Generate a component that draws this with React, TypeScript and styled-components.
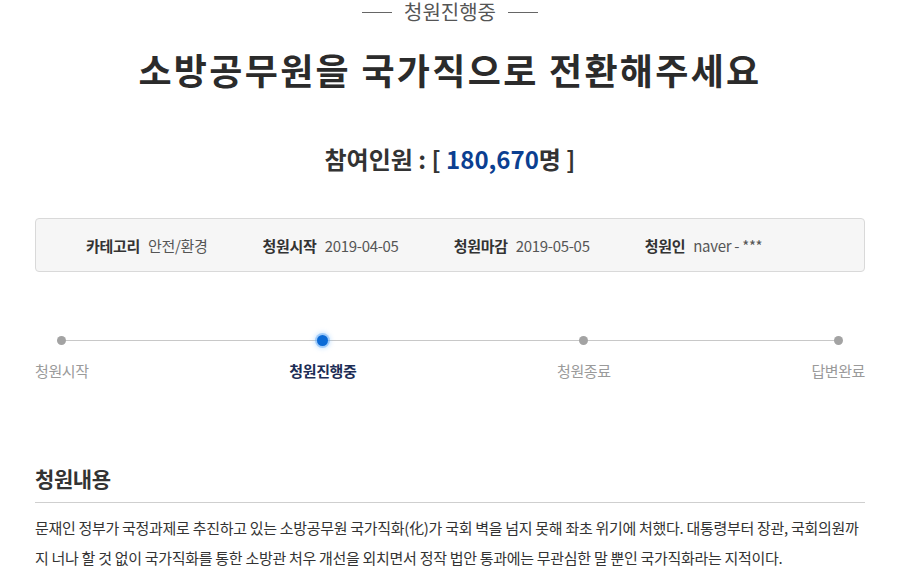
import styled, { createGlobalStyle } from "styled-components";

const GlobalStyle = createGlobalStyle`
  html, body {
    margin: 0;
    padding: 0;
    background: #fff;
    overflow: hidden;
  }
  body {
    font-family: "Noto Sans CJK KR", "Noto Sans", sans-serif;
    color: #333;
  }
`;

const Page = styled.div`
  width: 830px;
  margin: 0 auto;
  display: flex;
  flex-direction: column;
`;

const Status = styled.div`
  display: flex;
  justify-content: center;
  align-items: center;
  gap: 12px;
  font-size: 20px;
  line-height: 24px;
  color: #555;
  &::before,
  &::after {
    content: "";
    width: 30px;
    height: 1px;
    background: #666;
  }
`;

const Title = styled.h1`
  margin: 21px 0 0;
  text-align: center;
  font-size: 36px;
  line-height: 48px;
  font-weight: 700;
  color: #2b2b2b;
  letter-spacing: 2.3px;
`;

const Count = styled.div`
  margin-top: 50px;
  text-align: center;
  font-size: 24px;
  line-height: 32px;
  font-weight: 700;
  color: #333;
`;

const Num = styled.span`
  color: #0b3f91;
`;

const InfoBox = styled.ul`
  margin: 43px 0 0;
  padding: 0 0 0 50px;
  height: 54px;
  box-sizing: border-box;
  list-style: none;
  display: flex;
  align-items: center;
  gap: 55px;
  background: #f6f6f6;
  border: 1px solid #d9d9d9;
  border-radius: 4px;
`;

const InfoItem = styled.li`
  display: flex;
  align-items: center;
  gap: 8px;
  font-size: 15px;
  letter-spacing: -0.3px;
`;

const InfoLabel = styled.strong`
  font-weight: 700;
  color: #333;
`;

const InfoValue = styled.span`
  color: #555;
`;

const Steps = styled.ol`
  position: relative;
  margin: 58px 0 0;
  padding: 0;
  list-style: none;
  display: flex;
  justify-content: space-between;
  &::before {
    content: "";
    position: absolute;
    left: 27px;
    right: 28px;
    top: 10px;
    height: 1px;
    background: #c8c8c8;
  }
`;

const Step = styled.li`
  position: relative;
  display: flex;
  flex-direction: column;
  align-items: center;
`;

const DotWrap = styled.div`
  height: 20px;
  display: flex;
  align-items: center;
  justify-content: center;
`;

const Dot = styled.span<{ $active?: boolean }>`
  width: ${(p) => (p.$active ? "11px" : "9px")};
  height: ${(p) => (p.$active ? "11px" : "9px")};
  border-radius: 50%;
  background: ${(p) => (p.$active ? "#0a6ad6" : "#a3a3a3")};
  box-shadow: ${(p) =>
    p.$active
      ? "0 0 0 2px rgba(90, 165, 245, 0.45), 0 0 4px 3px rgba(120, 190, 255, 0.35)"
      : "none"};
`;

const StepLabel = styled.span<{ $active?: boolean }>`
  margin-top: 10px;
  font-size: 15px;
  line-height: 22px;
  letter-spacing: -0.4px;
  font-weight: ${(p) => (p.$active ? 700 : 400)};
  color: ${(p) => (p.$active ? "#1c2d55" : "#9a9a9a")};
`;

const SectionTitle = styled.h2`
  margin: 82px 0 0;
  padding-bottom: 10px;
  border-bottom: 1px solid #cfcfcf;
  font-size: 21px;
  line-height: 28px;
  font-weight: 700;
  color: #333;
  letter-spacing: -0.4px;
`;

const Content = styled.p`
  margin: 10px 0 0;
  font-size: 15px;
  line-height: 30px;
  color: #333;
  letter-spacing: -0.3px;
  word-break: break-all;
`;

const steps = [
  { label: "청원시작" },
  { label: "청원진행중", active: true },
  { label: "청원종료" },
  { label: "답변완료" },
];

const info = [
  ["카테고리", "안전/환경"],
  ["청원시작", "2019-04-05"],
  ["청원마감", "2019-05-05"],
  ["청원인", "naver - ***"],
];

export default function App() {
  return (
    <>
      <GlobalStyle />
      <Page>
        <Status>청원진행중</Status>
        <Title>소방공무원을 국가직으로 전환해주세요</Title>
        <Count>
          참여인원 : [ <Num>180,670</Num>명 ]
        </Count>
        <InfoBox>
          {info.map(([label, value]) => (
            <InfoItem key={label}>
              <InfoLabel>{label}</InfoLabel>
              <InfoValue>{value}</InfoValue>
            </InfoItem>
          ))}
        </InfoBox>
        <Steps>
          {steps.map((s) => (
            <Step key={s.label}>
              <DotWrap>
                <Dot $active={s.active} />
              </DotWrap>
              <StepLabel $active={s.active}>{s.label}</StepLabel>
            </Step>
          ))}
        </Steps>
        <SectionTitle>청원내용</SectionTitle>
        <Content>
          문재인 정부가 국정과제로 추진하고 있는 소방공무원 국가직화(化)가 국회 벽을 넘지 못해 좌초 위기에 처했다. 대통령부터 장관, 국회의원까지 너나 할 것 없이 국가직화를 통한 소방관 처우 개선을 외치면서 정작 법안 통과에는 무관심한 말 뿐인 국가직화라는 지적이다.
        </Content>
      </Page>
    </>
  );
}
